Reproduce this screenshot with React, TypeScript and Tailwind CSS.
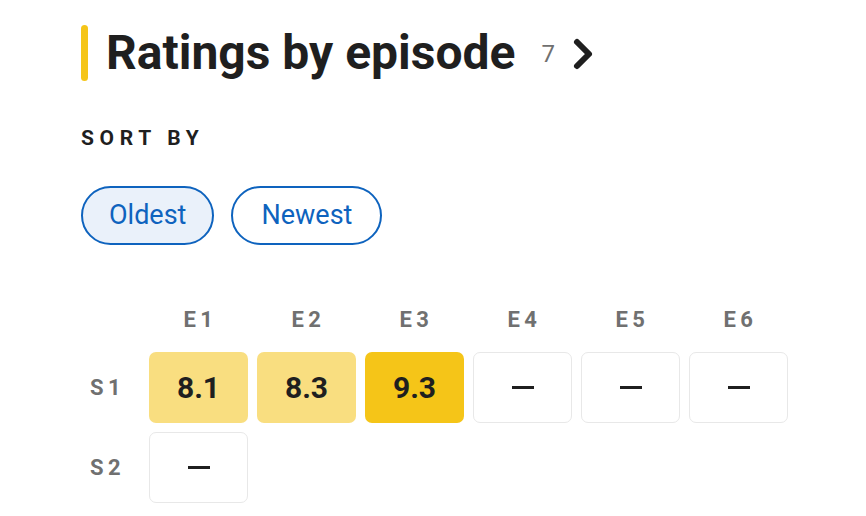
import { ChevronRight } from 'lucide-react';

const episodes = ['E1', 'E2', 'E3', 'E4', 'E5', 'E6'];

const seasons: { label: string; ratings: (number | null)[] }[] = [
  { label: 'S1', ratings: [8.1, 8.3, 9.3, null, null, null] },
  { label: 'S2', ratings: [null] },
];

function cellClass(r: number | null) {
  if (r === null) return 'bg-white border border-[#e8e8e8]';
  if (r >= 9) return 'bg-[#f5c518]';
  return 'bg-[#f9de80]';
}

export default function App() {
  return (
    <div className="w-[866px] h-[516px] bg-white font-['Roboto',sans-serif] text-[#1f1f1f] pl-[81px] pt-[25px]">
      {/* Header */}
      <div className="flex items-center h-[56px]">
        <div className="w-[7px] h-[56px] rounded-full bg-[#f5c518]" />
        <h2 className="ml-[18px] text-[48px] font-bold tracking-[0px] leading-none">Ratings by episode</h2>
        <span className="ml-[26px] text-[24px] text-[#707070] mt-[2px]">7</span>
        <ChevronRight size={48} strokeWidth={3} className="ml-[4px] mt-[2px]" />
      </div>

      <div className="mt-[47px] text-[21px] font-bold tracking-[0.27em] leading-none">SORT BY</div>

      <div className="mt-[37px] flex gap-[17px]">
        <button className="h-[59px] px-[26px] rounded-full border-2 border-[#0e63be] bg-[#eaf1fa] text-[#0e63be] text-[27px]">
          Oldest
        </button>
        <button className="h-[59px] px-[28px] rounded-full border-2 border-[#0e63be] bg-white text-[#0e63be] text-[27px]">
          Newest
        </button>
      </div>

      {/* Ratings grid */}
      <div className="mt-[64px] grid grid-cols-[59px_repeat(6,99px)] gap-x-[9px] gap-y-[9px] items-center">
        <div />
        {episodes.map((e) => (
          <div key={e} className="text-center text-[22px] font-bold tracking-[0.2em] text-[#707070] leading-none h-[34px] pl-[4px]">
            {e}
          </div>
        ))}
        {seasons.map((s) => (
          <div key={s.label} className="contents">
            <div className="pl-[9px] text-[22px] font-bold tracking-[0.2em] text-[#707070]">{s.label}</div>
            {s.ratings.map((r, i) => (
              <div
                key={i}
                className={`h-[71px] rounded-[7px] flex items-center justify-center text-[30px] font-bold ${cellClass(r)}`}
              >
                {r === null ? <div className="w-[22px] h-[3px] bg-[#1f1f1f]" /> : r.toFixed(1)}
              </div>
            ))}
            {s.ratings.length < 6 && <div className="col-span-5" />}
          </div>
        ))}
      </div>
    </div>
  );
}
